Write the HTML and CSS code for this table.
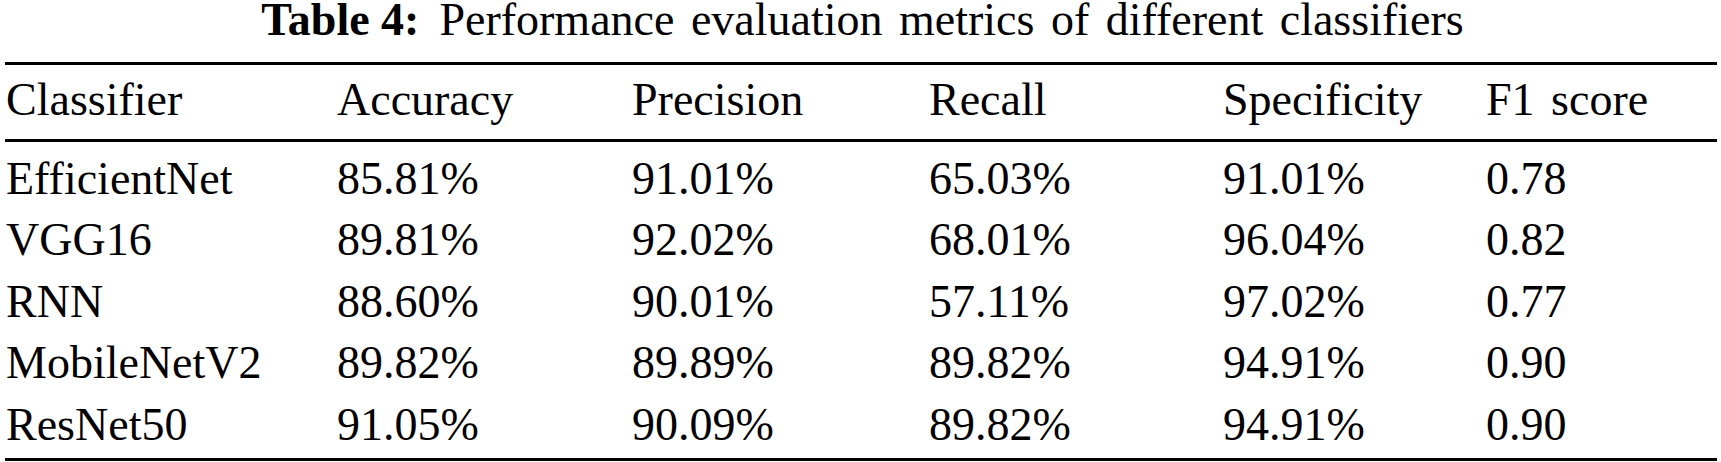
FILE: index.html
```html
<!DOCTYPE html>
<html lang="en">
<head>
<meta charset="utf-8">
<title>Performance evaluation metrics</title>
<link rel="stylesheet" href="styles.css">
</head>
<body>
<div class="page face size">
  <div class="caption face size"><span class="label face size">Table 4:</span><span class="caption-text face size">Performance evaluation metrics of different classifiers</span></div>
  <div class="table">
    <div class="row head face size">
      <span class="cell face size">Classifier</span><span class="cell face size">Accuracy</span><span class="cell face size">Precision</span><span class="cell face size">Recall</span><span class="cell face size">Specificity</span><span class="cell face size">F1 score</span>
    </div>
    <div class="tbody">
      <div class="row face size">
        <span class="cell face size">EfficientNet</span><span class="cell face size">85.81%</span><span class="cell face size">91.01%</span><span class="cell face size">65.03%</span><span class="cell face size">91.01%</span><span class="cell face size">0.78</span>
      </div>
      <div class="row face size">
        <span class="cell face size">VGG16</span><span class="cell face size">89.81%</span><span class="cell face size">92.02%</span><span class="cell face size">68.01%</span><span class="cell face size">96.04%</span><span class="cell face size">0.82</span>
      </div>
      <div class="row face size">
        <span class="cell face size">RNN</span><span class="cell face size">88.60%</span><span class="cell face size">90.01%</span><span class="cell face size">57.11%</span><span class="cell face size">97.02%</span><span class="cell face size">0.77</span>
      </div>
      <div class="row face size">
        <span class="cell face size">MobileNetV2</span><span class="cell face size">89.82%</span><span class="cell face size">89.89%</span><span class="cell face size">89.82%</span><span class="cell face size">94.91%</span><span class="cell face size">0.90</span>
      </div>
      <div class="row face size">
        <span class="cell face size">ResNet50</span><span class="cell face size">91.05%</span><span class="cell face size">90.09%</span><span class="cell face size">89.82%</span><span class="cell face size">94.91%</span><span class="cell face size">0.90</span>
      </div>
    </div>
  </div>
</div>
</body>
</html>
```

FILE: styles.css
```css
body { margin: 0; }

.face { font-family: "Liberation Serif", monospace; }

.size { font-size: 46px; }

.page {
  width: 1721px;
  height: 462px;
  overflow: hidden;
  background: #ffffff;
  word-spacing: 5px;
}

.caption {
  text-align: center;
  line-height: 40px;
  height: 40px;
  padding-left: 4px;
  white-space: nowrap;
}

.label {
  font-weight: bold;
  margin-right: 20px;
  word-spacing: 0;
}

.table {
  margin: 22px 4px 0 5px;
  border-top: 3px solid #000;
  border-bottom: 3px solid #000;
  padding: 4px 0 3px;
}

.row {
  display: grid;
  grid-template-columns: 331px 295px 297px 294px 263px 1fr;
  height: 61.5px;
  line-height: 61.5px;
  white-space: nowrap;
}

.cell {
  padding-left: 1px;
}

.head {
  margin-bottom: 8px;
}

.tbody {
  border-top: 3px solid #000;
  padding-top: 6px;
}
```
